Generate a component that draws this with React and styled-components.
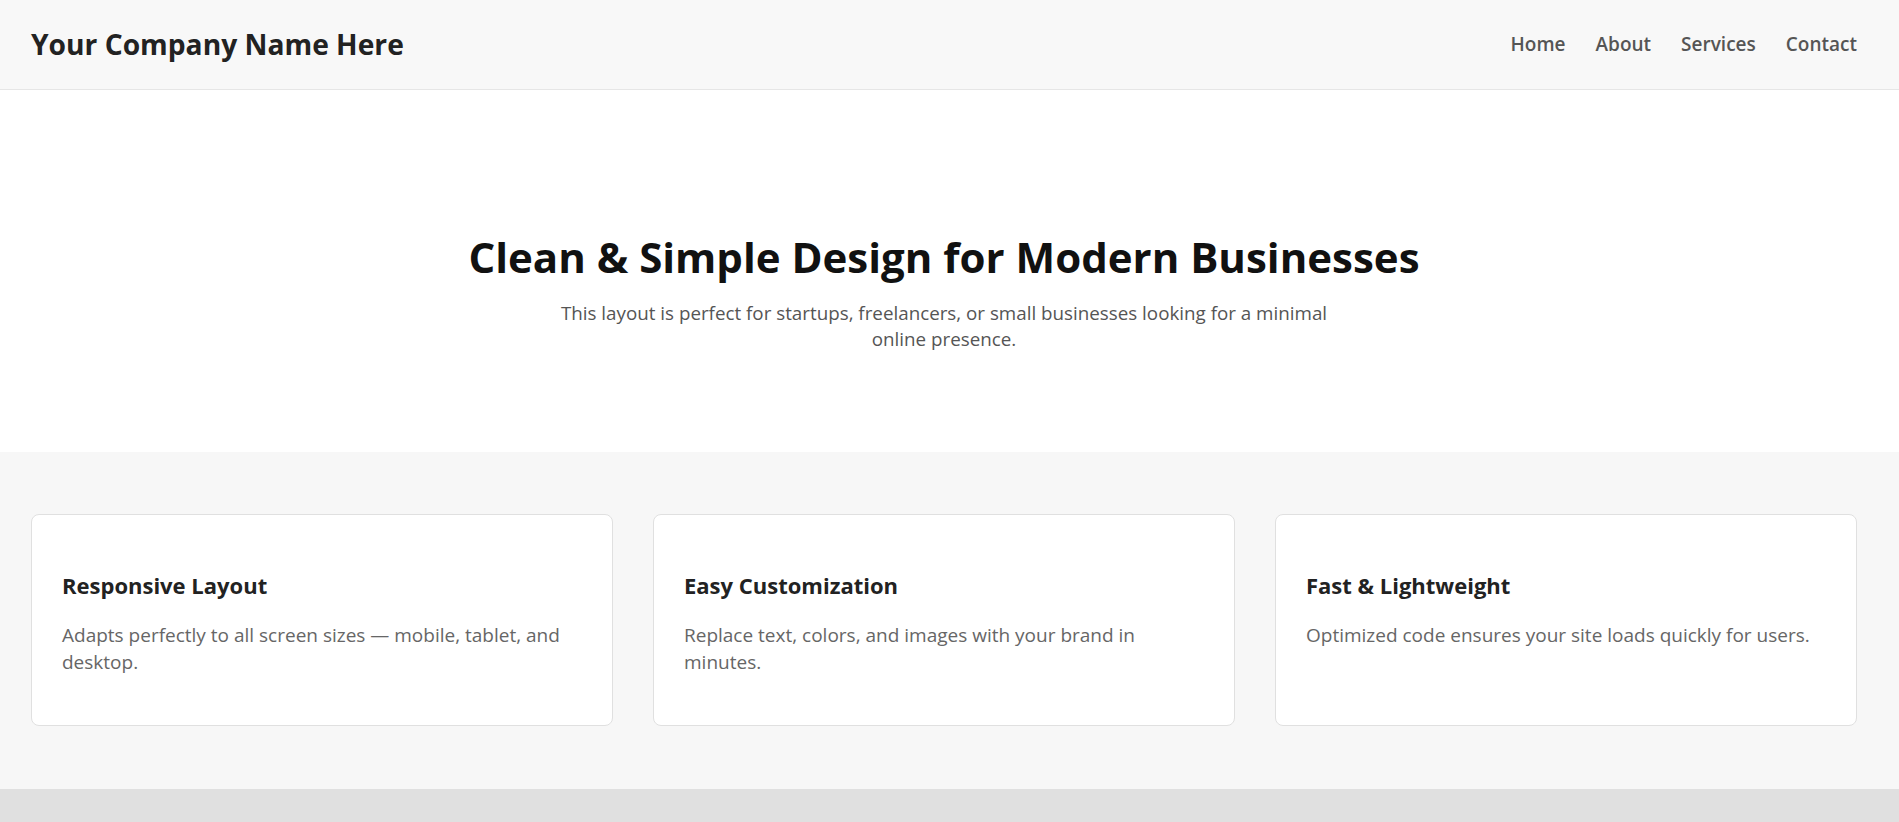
import React from "react";
import styled, { createGlobalStyle } from "styled-components";

const GlobalStyle = createGlobalStyle`
  html, body {
    margin: 0;
    padding: 0;
    background: #ffffff;
  }
  body {
    font-family: "Open Sans", "Noto Sans", "DejaVu Sans", sans-serif;
    color: #222222;
    line-height: 1.33;
  }
  * { box-sizing: border-box; }
`;

const Header = styled.header`
  display: flex;
  align-items: center;
  justify-content: space-between;
  height: 90px;
  padding: 0 42px 0 31px;
  background: #f8f8f8;
  border-bottom: 1px solid #e6e6e6;
`;

const Logo = styled.div`
  font-size: 28.2px;
  font-weight: 700;
  color: #222222;
`;

const Nav = styled.nav`
  display: flex;
  align-items: center;
  gap: 30px;
`;

const NavLink = styled.a`
  font-size: 19px;
  font-weight: 600;
  color: #555555;
  text-decoration: none;
`;

const Hero = styled.section`
  display: flex;
  flex-direction: column;
  align-items: center;
  text-align: center;
  padding: 139px 42px 99.5px 31px;
  background: #ffffff;
`;

const Title = styled.h1`
  margin: 0 0 15px;
  font-size: 42px;
  font-weight: 700;
  color: #111111;
  line-height: 1.33;
`;

const Lead = styled.p`
  margin: 0;
  max-width: 800px;
  font-size: 18.8px;
  line-height: 1.41;
  color: #555555;
`;

const Features = styled.section`
  display: grid;
  grid-template-columns: repeat(3, 1fr);
  gap: 40px;
  padding: 62px 42px 63px 31px;
  background: #f7f7f7;
`;

const Card = styled.article`
  padding: 30px;
  background: #ffffff;
  border: 1px solid #e0e0e0;
  border-radius: 8px;
`;

const CardTitle = styled.h3`
  margin: 25px 0 21px;
  font-size: 22px;
  font-weight: 700;
  color: #222222;
  line-height: 1.4;
`;

const CardText = styled.p`
  margin: 20px 0;
  font-size: 19px;
  line-height: 1.4;
  color: #666666;
`;

const Footer = styled.footer`
  padding: 40px 42px 40px 31px;
  background: #e0e0e0;
  text-align: center;
  font-size: 17px;
  color: #555555;
`;

const features = [
  {
    title: "Responsive Layout",
    text: "Adapts perfectly to all screen sizes — mobile, tablet, and desktop.",
  },
  {
    title: "Easy Customization",
    text: "Replace text, colors, and images with your brand in minutes.",
  },
  {
    title: "Fast & Lightweight",
    text: "Optimized code ensures your site loads quickly for users.",
  },
];

export default function App() {
  return (
    <>
      <GlobalStyle />
      <Header>
        <Logo>Your Company Name Here</Logo>
        <Nav>
          <NavLink href="#">Home</NavLink>
          <NavLink href="#">About</NavLink>
          <NavLink href="#">Services</NavLink>
          <NavLink href="#">Contact</NavLink>
        </Nav>
      </Header>
      <Hero>
        <Title>Clean &amp; Simple Design for Modern Businesses</Title>
        <Lead>
          This layout is perfect for startups, freelancers, or small businesses
          looking for a minimal online presence.
        </Lead>
      </Hero>
      <Features>
        {features.map((f) => (
          <Card key={f.title}>
            <CardTitle>{f.title}</CardTitle>
            <CardText>{f.text}</CardText>
          </Card>
        ))}
      </Features>
      <Footer>© 2025 Your Company Name. All rights reserved.</Footer>
    </>
  );
}
